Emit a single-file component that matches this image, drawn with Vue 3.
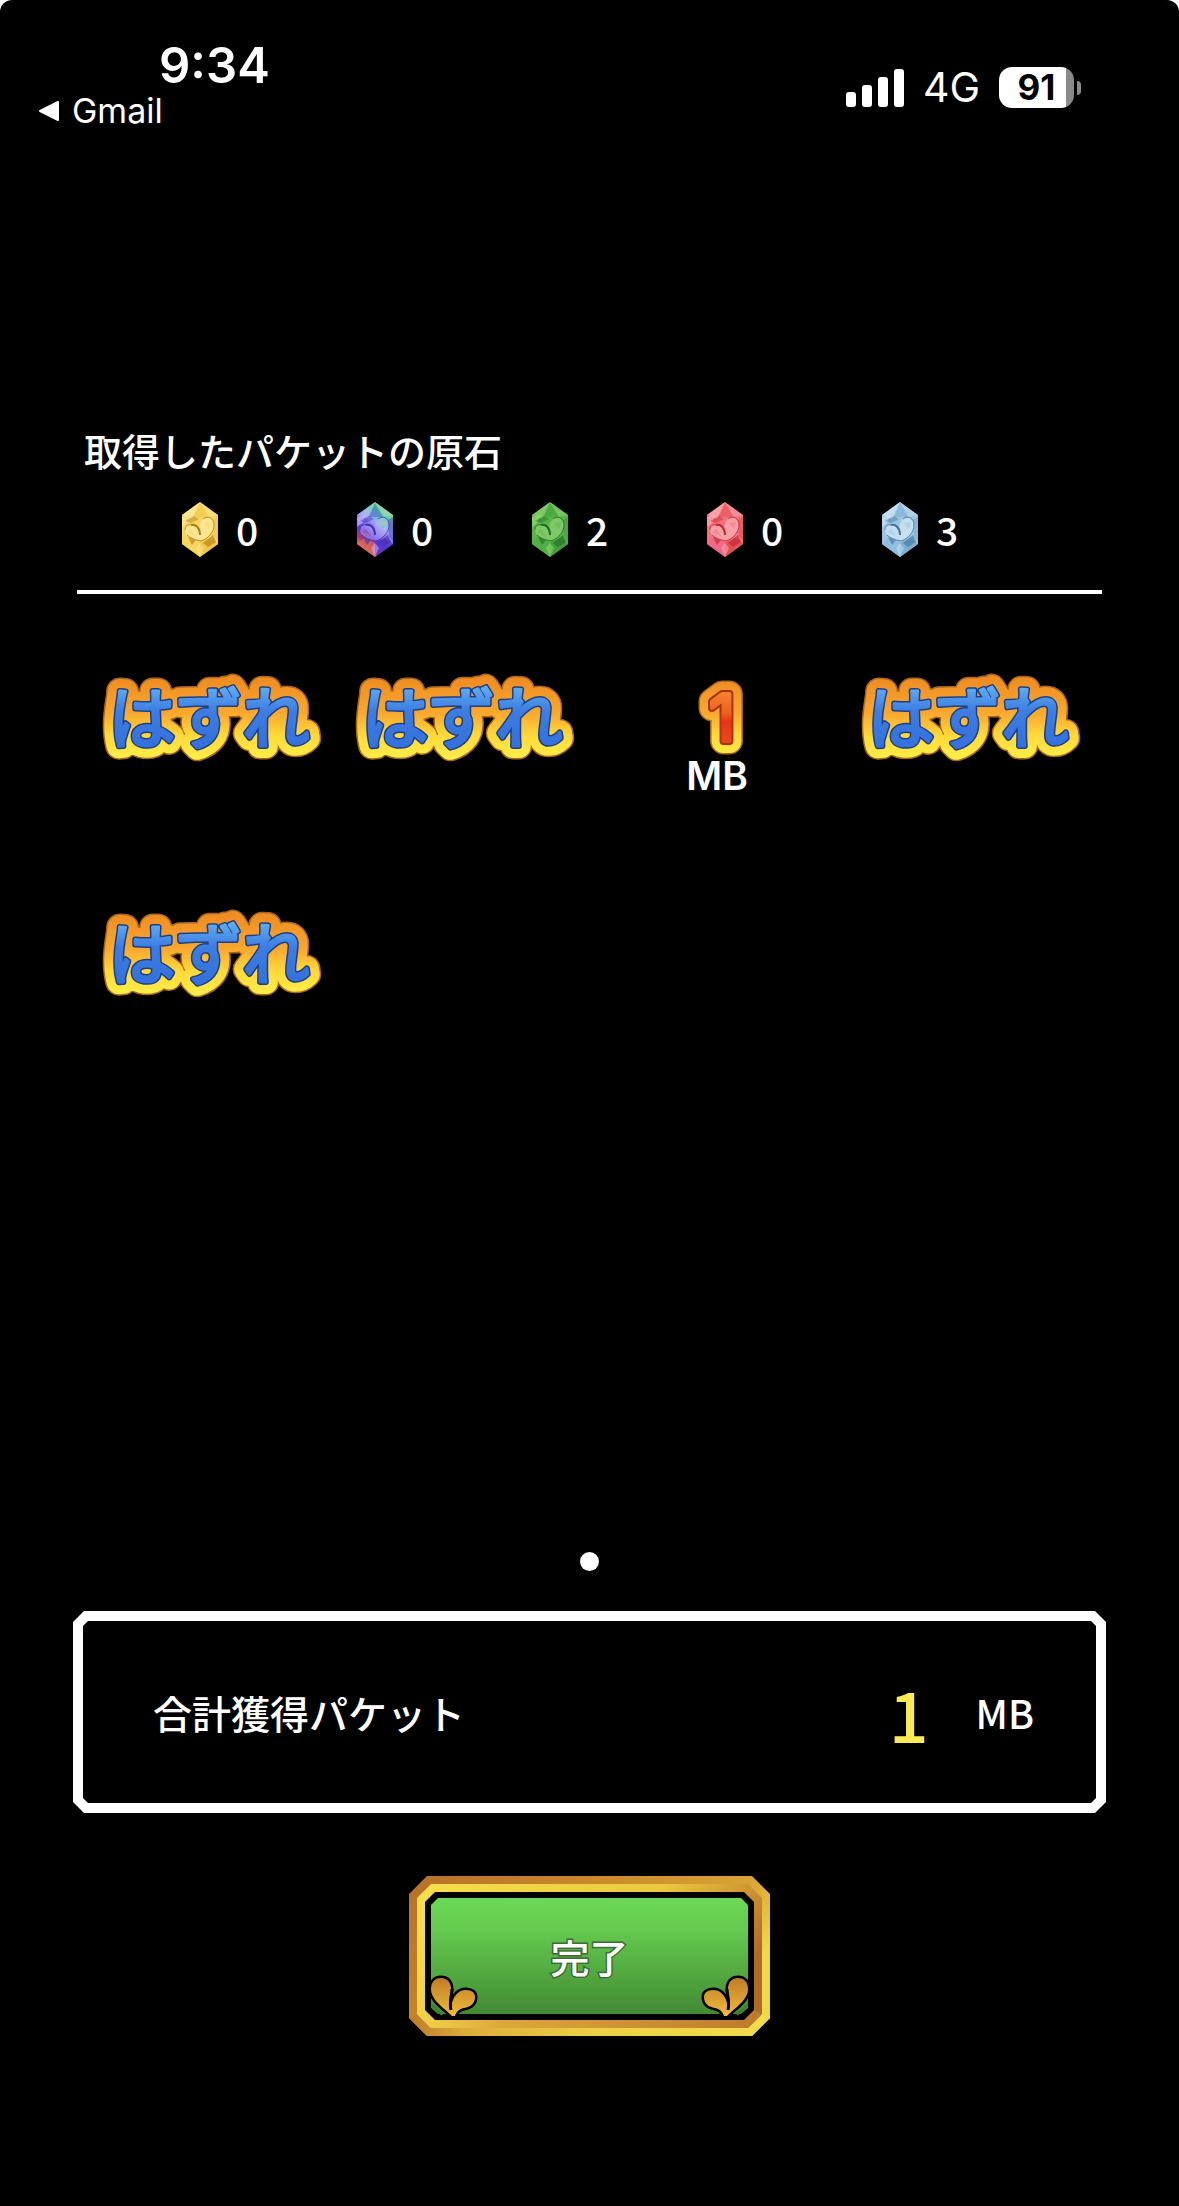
<template>
  <div class="screen">
    <svg class="defs" width="0" height="0" aria-hidden="true">
      <defs>
        <linearGradient id="goldEdge" gradientUnits="userSpaceOnUse" x1="0" y1="0" x2="0" y2="84">
          <stop offset="0" stop-color="#ee8a22" />
          <stop offset="0.45" stop-color="#f9a92f" />
          <stop offset="0.7" stop-color="#ffd83a" />
          <stop offset="1" stop-color="#fff04a" />
        </linearGradient>
        <linearGradient id="blueFill" gradientUnits="userSpaceOnUse" x1="0" y1="10" x2="0" y2="72">
          <stop offset="0" stop-color="#62aef0" />
          <stop offset="0.4" stop-color="#3d7de2" />
          <stop offset="1" stop-color="#3470dc" />
        </linearGradient>
        <linearGradient id="redFill" gradientUnits="userSpaceOnUse" x1="0" y1="12" x2="0" y2="68">
          <stop offset="0" stop-color="#f58a30" />
          <stop offset="0.45" stop-color="#ee6020" />
          <stop offset="0.6" stop-color="#e8341a" />
          <stop offset="1" stop-color="#ea4a1c" />
        </linearGradient>
        <linearGradient id="rainbow" x1="0.8" y1="0" x2="0.3" y2="1">
          <stop offset="0" stop-color="#9af05a" />
          <stop offset="0.24" stop-color="#4fd6a4" />
          <stop offset="0.42" stop-color="#9aa0f6" />
          <stop offset="0.66" stop-color="#5a38e0" />
          <stop offset="0.8" stop-color="#a8346e" />
          <stop offset="1" stop-color="#f09a78" />
        </linearGradient>
      </defs>
    </svg>

    <header class="status">
      <div class="status-left">
        <div class="time">9:34</div>
        <a class="back" href="#">
          <svg width="22" height="22" viewBox="0 0 22 22" aria-hidden="true">
            <path d="M2 11 20 2V20Z" fill="#fff" stroke="#fff" stroke-width="2" stroke-linejoin="round" />
          </svg>
          <span>Gmail</span>
        </a>
      </div>
      <div class="status-right">
        <svg width="58" height="38" viewBox="0 0 58 38" fill="#fff" aria-hidden="true">
          <rect x="0" y="23" width="10" height="15" rx="3" />
          <rect x="16" y="16" width="10" height="22" rx="3" />
          <rect x="32" y="8" width="10" height="30" rx="3" />
          <rect x="48" y="0" width="10" height="38" rx="3" />
        </svg>
        <span class="network">4G</span>
        <div class="battery">
          <span class="battery-body">91</span>
          <span class="battery-tip"></span>
        </div>
      </div>
    </header>

    <main class="content">
      <section class="gems">
        <h1>取得したパケットの原石</h1>
        <ul class="gem-list">
          <li v-for="gem in gems" :key="gem.name">
            <svg width="36" height="55" viewBox="0 0 36 55" aria-hidden="true">
              <path d="M18 0 36 13V42L18 55 0 42V13Z" :fill="gem.base" />
              <path d="M18 0 10 17 0 13Z" :fill="gem.light" :opacity="gem.heart" />
              <path d="M18 0 27 15 36 13Z" :fill="gem.light" opacity="0.4" />
              <path d="M18 1 12 15H26Z" :fill="gem.mid" opacity="0.4" />
              <path d="M0 15 9 13 5 21 0 25Z" :fill="gem.light" opacity="0.6" />
              <path d="M3 19 12 14 17 17 9 21Z" :fill="gem.dark" opacity="0.45" />
              <path d="M0 42 8 35 18 41V55Z" :fill="gem.low" opacity="0.7" />
              <path d="M36 42 28 36 18 41V55Z" :fill="gem.mid" opacity="0.8" />
              <path d="M6 35 14 38 10 43ZM21 41 31 33 34 40 26 45Z" :fill="gem.dark" opacity="0.6" />
              <path d="M18 41 22 46 18 55 14 46Z" :fill="gem.light" opacity="0.5" />
              <path d="M31 18 36 15V39L32 34Z" :fill="gem.mid" opacity="0.5" />
              <path
                d="M18 39C13 38 3 35 3 28 3 22 12 21 17 27 18 29 19 31 19 33 17 28 16 23 20 18 24 13 32 16 32 23 32 30 26 37 18 39Z"
                :fill="gem.light" :opacity="gem.heart" />
              <path d="M9 23C14 22 18 26 18 33" fill="none" :stroke="gem.dark" stroke-width="2" />
              <path d="M3 28C3 24 6 22 9 23M21 17C26 13 32 16 32 23 32 30 26 37 19 39 13 38 8 36 5 33" fill="none"
                :stroke="gem.dark" stroke-width="1" opacity="0.8" />
              <path d="M5 30 9 27 15 35ZM22 21 29 20 27 27Z" :fill="gem.base" opacity="0.45" />
            </svg>
            <span>{{ gem.count }}</span>
          </li>
        </ul>
      </section>

      <ul class="prizes">
        <li v-for="(prize, i) in prizes" :key="i">
          <svg v-if="prize === 0" width="216" height="108" viewBox="0 -12 216 108" class="miss">
            <text x="106" y="67" class="edge-dark">はずれ</text>
            <text x="106" y="67" class="edge-gold" aria-hidden="true">はずれ</text>
            <text x="106" y="67" class="edge-navy" aria-hidden="true">はずれ</text>
            <text x="106" y="67" class="fill-blue" aria-hidden="true">はずれ</text>
          </svg>
          <template v-else>
            <svg width="60" height="108" viewBox="0 -12 60 108" class="win">
              <text x="35" y="65" class="edge-dark">{{ prize }}</text>
              <text x="35" y="65" class="edge-gold" aria-hidden="true">{{ prize }}</text>
              <text x="35" y="65" class="edge-red" aria-hidden="true">{{ prize }}</text>
              <text x="35" y="65" class="fill-red" aria-hidden="true">{{ prize }}</text>
            </svg>
            <span class="unit">MB</span>
          </template>
        </li>
      </ul>

      <div class="dots"><span></span></div>

      <section class="total">
        <div class="total-inner">
          <span class="total-label">合計獲得パケット</span>
          <span class="total-value">{{ total }}</span>
          <span class="total-unit">MB</span>
        </div>
      </section>

      <button type="button" class="done">
        <svg viewBox="0 0 361 160" aria-hidden="true">
          <defs>
            <linearGradient id="frameOuter" x1="0" y1="0" x2="1" y2="0.45">
              <stop offset="0" stop-color="#b5702a" />
              <stop offset="0.45" stop-color="#c98a2c" />
              <stop offset="0.8" stop-color="#d9a436" />
              <stop offset="1" stop-color="#f0d848" />
            </linearGradient>
            <linearGradient id="frameInner" x1="0" y1="0" x2="1" y2="0.45">
              <stop offset="0" stop-color="#f6e04c" />
              <stop offset="0.6" stop-color="#ecc93f" />
              <stop offset="0.85" stop-color="#c98c30" />
              <stop offset="1" stop-color="#b06a28" />
            </linearGradient>
            <linearGradient id="frameBottom" x1="0" y1="0" x2="1" y2="0">
              <stop offset="0" stop-color="#bd7a2a" />
              <stop offset="0.15" stop-color="#dcab3a" />
              <stop offset="0.5" stop-color="#ecd046" />
              <stop offset="1" stop-color="#f2dc4c" />
            </linearGradient>
            <linearGradient id="frameBottomInner" x1="0" y1="0" x2="1" y2="0">
              <stop offset="0" stop-color="#f0d448" />
              <stop offset="0.25" stop-color="#dca83a" />
              <stop offset="1" stop-color="#bd7a2c" />
            </linearGradient>
            <linearGradient id="green" x1="0" y1="0" x2="0" y2="1">
              <stop offset="0" stop-color="#6cd956" />
              <stop offset="0.25" stop-color="#64cc50" />
              <stop offset="1" stop-color="#438a32" />
            </linearGradient>
            <linearGradient id="leaf" x1="0" y1="0" x2="0" y2="1">
              <stop offset="0" stop-color="#c07c28" />
              <stop offset="1" stop-color="#f0bc3a" />
            </linearGradient>
          </defs>
          <path d="M18 0H343L361 18V142L343 160H18L0 142V18Z" fill="url(#frameOuter)" />
          <path d="M0 142 8 138 22 152H339L353 138 361 142 343 160H18Z" fill="url(#frameBottom)" />
          <path d="M22 8H339L353 22V138L339 152H22L8 138V22Z" fill="url(#frameInner)" />
          <path d="M8 138 16 134 26 144H335L345 134 353 138 339 152H22Z" fill="url(#frameBottomInner)" />
          <path d="M26 16H335L345 26V134L335 144H26L16 134V26Z" fill="#000" />
          <path d="M29 22H332L339 29V132L332 138H29L22 132V29Z" fill="url(#green)" />
          <g id="sprout">
            <path
              d="M43 140C34 131 22 124 22 113 22 105 27 102 32 102 39 102 42 107 42 113 42 120 38 124 42 131 44 120 49 114 57 114 63 114 66 117 66 121 66 128 61 131 55 132 49 133 47 137 46 140Z"
              fill="url(#leaf)" stroke="#000" stroke-width="5" stroke-linejoin="round" />
            <path
              d="M43 140C34 131 22 124 22 113 22 105 27 102 32 102 39 102 42 107 42 113 42 120 38 124 42 131 44 120 49 114 57 114 63 114 66 117 66 121 66 128 61 131 55 132 49 133 47 137 46 140Z"
              fill="url(#leaf)" />
            <path d="M43 113C43 120 40 125 42 134" fill="none" stroke="#000" stroke-width="3" />
            <path d="M22 128 33 139" stroke="#3a7f35" stroke-width="2" />
          </g>
          <use href="#sprout" transform="matrix(-1 0 0 1 361 0)" />
        </svg>
        <span>完了</span>
      </button>
    </main>
  </div>
</template>

<script setup>
import { computed, ref } from 'vue';

const gems = ref([
  { name: 'gold', count: 0, base: '#f6d560', light: '#fdeaa0', mid: '#f2c23c', low: '#f8d860', dark: '#ad7d1c', heart: 0.8 },
  { name: 'rainbow', count: 0, base: 'url(#rainbow)', light: '#cfc2fa', mid: '#5234d6', low: '#e06a5c', dark: '#4832a8', heart: 0.4 },
  { name: 'green', count: 2, base: '#57b548', light: '#a5dc85', mid: '#3f9a36', low: '#4fae44', dark: '#236a24', heart: 0.5 },
  { name: 'red', count: 0, base: '#f2707c', light: '#fbb4bb', mid: '#e2484c', low: '#f0648c', dark: '#bd2733', heart: 0.7 },
  { name: 'blue', count: 3, base: '#9cc5e2', light: '#d0e5f3', mid: '#76a8d0', low: '#8cbcde', dark: '#41719f', heart: 0.8 },
]);

// 0 はハズレ
const prizes = ref([0, 0, 1, 0, 0]);

const total = computed(() => prizes.value.reduce((sum, n) => sum + n, 0));
</script>

<style>
body {
  margin: 0;
  background: #fff;
}
</style>

<style scoped>
.screen {
  display: flex;
  flex-direction: column;
  min-height: 100vh;
  box-sizing: border-box;
  border-radius: 12px 12px 0 0;
  background: #000;
  color: #fff;
  font-family: "Noto Sans CJK JP", sans-serif;
  font-weight: 500;
}

.defs {
  position: absolute;
}

ul {
  list-style: none;
  margin: 0;
  padding: 0;
}

/* ステータスバー */
.status {
  display: flex;
  justify-content: space-between;
  align-items: flex-start;
  padding: 41px 98px 0 38px;
  height: 384px;
  box-sizing: border-box;
  font-family: Inter, sans-serif;
  font-weight: 400;
}

.time {
  padding-left: 121px;
  font-size: 49px;
  font-weight: 600;
  line-height: 50px;
}

.back {
  display: flex;
  align-items: center;
  gap: 12px;
  color: #fff;
  font-size: 34px;
  line-height: 40px;
  text-decoration: none;
}

.status-right {
  display: flex;
  align-items: center;
  gap: 19px;
  padding-top: 26px;
}

.network {
  font-size: 41px;
  line-height: 41px;
}

.battery {
  display: flex;
  align-items: center;
  gap: 3px;
}

.battery-body {
  width: 75px;
  border-radius: 13px;
  background: linear-gradient(90deg, #fff 90%, #8a8a8a 90%);
  color: #000;
  font-size: 35px;
  font-weight: 700;
  line-height: 41px;
  text-align: center;
}

.battery-tip {
  width: 4px;
  height: 14px;
  border-radius: 0 6px 6px 0;
  background: #8a8a8a;
}

/* 結果 */
.content {
  display: flex;
  flex: 1;
  flex-direction: column;
  padding: 38px 73px 170px;
}

.gems {
  margin: 0 4px;
  padding-bottom: 33px;
  border-bottom: 4px solid #fff;
}

h1 {
  margin: 0 0 24px 7px;
  font-size: 38px;
  font-weight: 500;
  line-height: 56px;
}

.gem-list {
  display: grid;
  grid-template-columns: repeat(5, 1fr);
  padding: 0 45px 0 105px;
}

.gem-list li {
  display: flex;
  align-items: center;
  gap: 18px;
  font-size: 39px;
  line-height: 55px;
}

.prizes {
  display: grid;
  flex: 1;
  grid-template-columns: repeat(4, 1fr);
  grid-auto-rows: 236px;
  margin: 0 9px 0 11px;
  padding-top: 70px;
}

.prizes li {
  display: flex;
  flex-direction: column;
  align-items: center;
}

.prizes text {
  text-anchor: middle;
  stroke-linejoin: round;
}

.prizes svg {
  overflow: visible;
}

.miss {
  font-size: 67px;
  font-weight: 400;
}

.win {
  font-family: Inter, sans-serif;
  font-size: 64px;
  font-weight: 400;
}

.edge-dark {
  fill: #a8661c;
  stroke: #a8661c;
  stroke-width: 27px;
}

.edge-gold {
  fill: url(#goldEdge);
  stroke: url(#goldEdge);
  stroke-width: 24px;
}

.edge-navy {
  fill: #1c3f86;
  stroke: #1c3f86;
  stroke-width: 6px;
}

.edge-red {
  fill: #a5340e;
  stroke: #a5340e;
  stroke-width: 8px;
}

.fill-blue {
  fill: url(#blueFill);
  stroke: url(#blueFill);
  stroke-width: 3px;
}

.fill-red {
  fill: url(#redFill);
  stroke: url(#redFill);
  stroke-width: 4px;
}

.unit {
  margin-top: -12px;
  font-family: Inter, sans-serif;
  font-size: 39px;
  font-weight: 600;
  line-height: 32px;
}

.dots {
  display: flex;
  justify-content: center;
  margin-bottom: 40px;
}

.dots span {
  width: 19px;
  height: 19px;
  border-radius: 50%;
  background: #fff;
}

/* 合計 */
.total {
  padding: 10px;
  background: #fff;
  clip-path: polygon(11px 0, calc(100% - 11px) 0, 100% 11px, 100% calc(100% - 11px), calc(100% - 11px) 100%, 11px 100%, 0 calc(100% - 11px), 0 11px);
}

.total-inner {
  display: flex;
  align-items: center;
  padding: 0 62px 0 70px;
  height: 182px;
  background: #000;
  clip-path: polygon(5px 0, calc(100% - 5px) 0, 100% 5px, 100% calc(100% - 5px), calc(100% - 5px) 100%, 5px 100%, 0 calc(100% - 5px), 0 5px);
  font-size: 39px;
}

.total-label {
  flex: 1;
}

.total-value {
  margin-right: 47px;
  color: #fbe955;
  font-size: 70px;
}

.done {
  position: relative;
  align-self: center;
  width: 361px;
  height: 160px;
  margin-top: 63px;
  padding: 0;
  border: 0;
  background: none;
  color: #fff;
  font-family: inherit;
  font-size: 39px;
  font-weight: 500;
  cursor: pointer;
}

.done svg {
  position: absolute;
  inset: 0;
}

.done span {
  position: relative;
  -webkit-text-stroke: 3px #3c6b35;
  paint-order: stroke fill;
}
</style>
